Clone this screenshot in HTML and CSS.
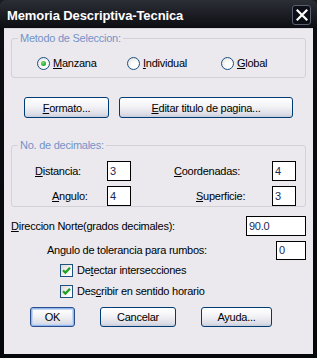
FILE: index.html
```html
<!DOCTYPE html>
<html>
<head>
<meta charset="utf-8">
<link rel="stylesheet" href="styles.css">
</head>
<body>
<div class="window">
  <div class="titlebar">
    <span class="title">Memoria Descriptiva-Tecnica</span>
    <span class="close">
      <svg width="12" height="12" viewBox="0 0 12 12"><path d="M1.5 1.5 L10.5 10.5 M10.5 1.5 L1.5 10.5" stroke="#fff" stroke-width="2.2" stroke-linecap="square"/></svg>
    </span>
  </div>
  <div class="client">
    <div class="group g1">
      <span class="legend">Metodo de Seleccion:</span>
      <div class="radios">
        <label class="radio r1"><span class="rbox on"><span class="dot"></span></span><span><u>M</u>anzana</span></label>
        <label class="radio r2"><span class="rbox"></span><span><u>I</u>ndividual</span></label>
        <label class="radio r3"><span class="rbox"></span><span><u>G</u>lobal</span></label>
      </div>
    </div>

    <div class="btnrow1">
      <button class="btn b-formato"><u>F</u>ormato...</button>
      <button class="btn b-editar"><u>E</u>ditar titulo de pagina...</button>
    </div>

    <div class="group g2">
      <span class="legend">No. de decimales:</span>
      <div class="decgrid">
        <span class="lbl l-dist"><u>D</u>istancia:</span>
        <span class="inp">3</span>
        <span class="lbl l-coord"><u>C</u>oordenadas:</span>
        <span class="inp">4</span>
        <span class="lbl l-ang"><u>A</u>ngulo:</span>
        <span class="inp">4</span>
        <span class="lbl l-sup"><u>S</u>uperficie:</span>
        <span class="inp">3</span>
      </div>
    </div>

    <div class="row row-norte">
      <span class="lbl"><u>D</u>ireccion Norte(grados decimales):</span>
      <span class="inp inp-norte">90.0</span>
    </div>
    <div class="row row-tol">
      <span class="lbl">Angulo de tolerancia para rumbos:</span>
      <span class="inp inp-tol">0</span>
    </div>
    <label class="check c1"><span class="cbox"><svg width="9" height="9" viewBox="0 0 9 9"><path d="M1 4.2 L3.4 6.6 L8 1.8" fill="none" stroke="#21a121" stroke-width="2.2"/></svg></span><span>De<u>t</u>ectar intersecciones</span></label>
    <label class="check c2"><span class="cbox"><svg width="9" height="9" viewBox="0 0 9 9"><path d="M1 4.2 L3.4 6.6 L8 1.8" fill="none" stroke="#21a121" stroke-width="2.2"/></svg></span><span>Des<u>c</u>ribir en sentido horario</span></label>

    <div class="btnrow2">
      <button class="btn default b-ok">OK</button>
      <button class="btn b-cancel">Cancelar</button>
      <button class="btn b-ayuda">Ayuda...</button>
    </div>
  </div>
</div>
</body>
</html>
```

FILE: styles.css
```css
html, body {
  margin: 0;
  padding: 0;
  background: #1b1c22;
}
.window {
  width: 317px;
  height: 358px;
  box-sizing: border-box;
  background: linear-gradient(#2c2e36, #0c0d12 8%, #06070b);
  border-radius: 6px 6px 0 0;
  padding: 0 4px 4px 4px;
  display: flex;
  flex-direction: column;
  font-family: "Liberation Sans", Arial, sans-serif;
  font-size: 11px;
  line-height: 13px;
  letter-spacing: -0.25px;
  color: #000;
}
.titlebar {
  height: 28px;
  flex: none;
  display: flex;
  align-items: center;
  justify-content: space-between;
  padding: 0 2px 0 3px;
}
.title {
  color: #fff;
  font-weight: bold;
  font-size: 13px;
  letter-spacing: -0.1px;
  margin-top: 2px;
}
.close {
  width: 17px;
  height: 18px;
  border: 1px solid #5a6070;
  border-radius: 3px;
  background: #0d0f16;
  display: flex;
  align-items: center;
  justify-content: center;
  margin-top: 2px;
}
.client {
  flex: 1;
  background: #ebe9ed;
  border-top: 1px solid #d8d6dc;
  padding: 9px 0 0 7px;
  box-sizing: border-box;
}
u { text-decoration: underline; text-underline-offset: 1px; }

.group {
  position: relative;
  border: 1px solid #d3d1d8;
  border-radius: 3px;
  width: 295px;
  box-sizing: border-box;
}
.legend {
  position: absolute;
  top: -7px;
  left: 6px;
  padding: 0 2px;
  background: #ebe9ed;
  color: #7493c8;
  line-height: 13px;
}
.g1 { height: 40px; padding-top: 18px; }
.radios {
  display: flex;
  align-items: center;
  height: 13px;
  padding-left: 25px;
}
.radio {
  display: flex;
  align-items: center;
  gap: 3px;
}
.r1 { width: 90px; }
.r2 { width: 94px; }
.rbox {
  flex: none;
  width: 11px;
  height: 11px;
  border: 1px solid #1c5180;
  border-radius: 50%;
  background: radial-gradient(circle at 65% 65%, #fff 30%, #dcdad6 100%);
  display: flex;
  align-items: center;
  justify-content: center;
}
.dot {
  width: 5px;
  height: 5px;
  border-radius: 50%;
  background: radial-gradient(circle at 40% 35%, #7be07b, #21a121 70%);
}

.btn {
  font-family: "Liberation Sans", Arial, sans-serif;
  font-size: 11px;
  letter-spacing: -0.25px;
  color: #000;
  height: 21px;
  border: 1px solid #003c74;
  border-radius: 3px;
  background: linear-gradient(#ffffff, #f3f3f6 45%, #dcdde6 85%, #c8cbda);
  padding: 0;
  box-sizing: border-box;
}
.btn.default {
  box-shadow: inset 0 0 0 1px #92b7ee, inset 0 0 0 2px #c5d6f3;
  border-color: #2a4e8c;
}
.btnrow1 {
  display: flex;
  margin-top: 19px;
  padding-left: 13px;
  gap: 10px;
}
.b-formato { width: 85px; }
.b-editar { width: 174px; }

.g2 { height: 62px; margin-top: 27px; padding-top: 15px; }
.decgrid {
  display: grid;
  grid-template-columns: 95px 24px 141px 24px;
  grid-template-rows: 20px 20px;
  row-gap: 5px;
  align-items: center;
}
.lbl { white-space: nowrap; }
.l-dist { padding-left: 23px; }
.l-ang { padding-left: 40px; }
.l-coord { padding-left: 43px; }
.l-sup { padding-left: 65px; }
.inp {
  box-sizing: border-box;
  height: 20px;
  border: 1px solid #000;
  background: #fff;
  padding: 0 0 0 2px;
  display: flex;
  align-items: center;
  color: #1a2a55;
}
.row {
  display: flex;
  align-items: center;
  justify-content: space-between;
  width: 295px;
  box-sizing: border-box;
}
.row-norte { margin-top: 9px; }
.inp-norte { width: 60px; height: 20px; }
.row-tol { margin-top: 5px; padding-left: 36px; }
.inp-tol { width: 30px; height: 19px; }
.check {
  display: flex;
  align-items: center;
  gap: 4px;
  margin-left: 49px;
  height: 13px;
}
.c1 { margin-top: 4px; }
.c2 { margin-top: 8px; }
.cbox {
  flex: none;
  width: 11px;
  height: 11px;
  border: 1px solid #1c5180;
  background: linear-gradient(135deg, #dcdad6, #fff 80%);
  display: flex;
  align-items: center;
  justify-content: center;
}
.btnrow2 {
  display: flex;
  margin-top: 9px;
  padding-left: 19px;
  gap: 25px;
}
.btnrow2 .btn { height: 20px; }
.b-ok { width: 45px; }
.b-cancel { width: 76px; }
.b-ayuda { width: 71px; }
```
